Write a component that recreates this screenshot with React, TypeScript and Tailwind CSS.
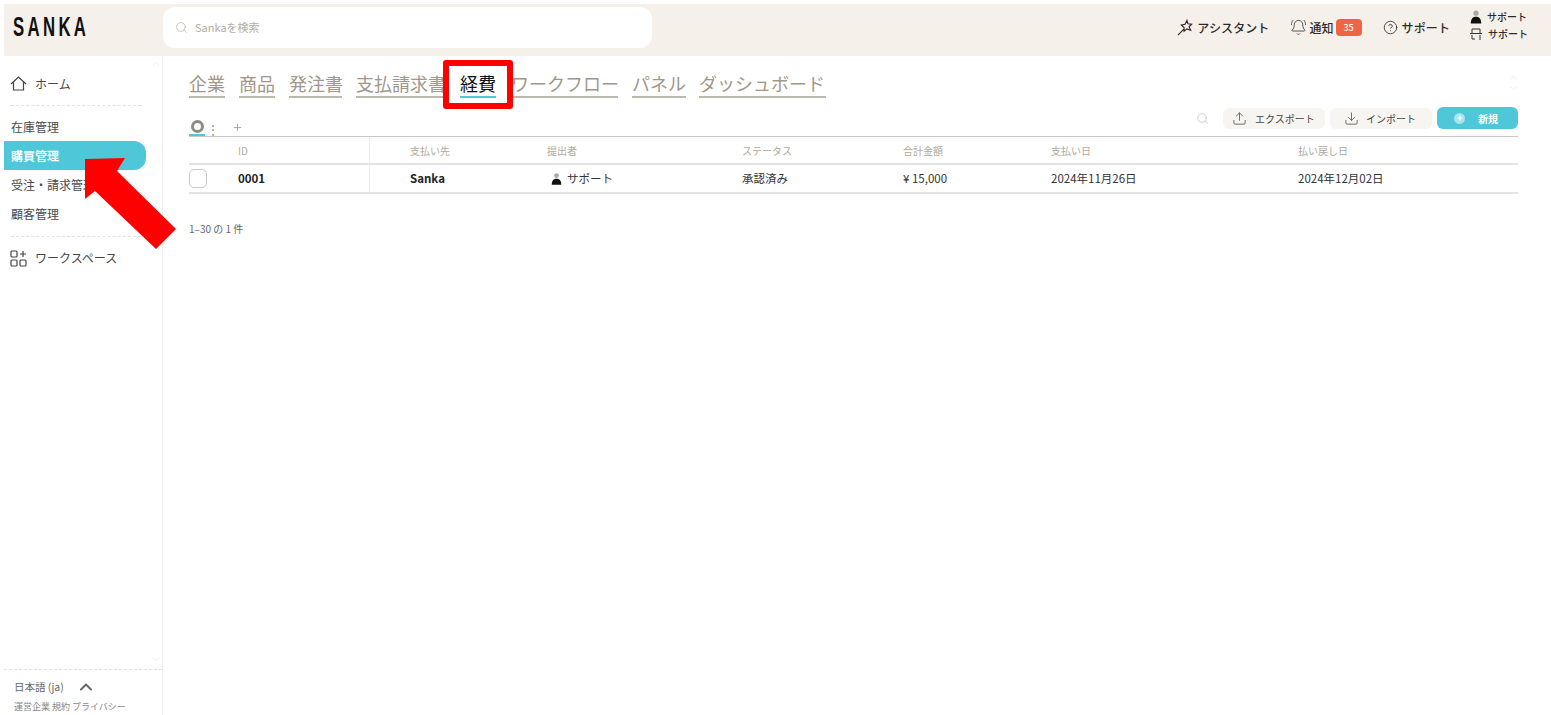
import { BellRing, ChevronDown, ChevronUp, CircleHelp, Download, Plus, Search, Upload } from "lucide-react";

const font = { fontFamily: '"Noto Sans CJK JP", "Noto Sans", sans-serif' };

const tabs = [
  { label: "企業", className: "w-9" },
  { label: "商品", className: "ml-[14px] w-9" },
  { label: "発注書", className: "ml-[14px] w-[53px]" },
  { label: "支払請求書", className: "ml-[14px] w-[89px]" },
];
const tabsAfter = [
  { label: "ワークフロー", className: "ml-[15px] w-[107px]" },
  { label: "パネル", className: "ml-[14px] w-[54px]" },
  { label: "ダッシュボード", className: "ml-[13px] w-[127px]" },
];

const headers = ["支払い先", "提出者", "ステータス", "合計金額", "支払い日", "払い戻し日"];

const gridCols = "grid grid-cols-[49px_131px_41px_137px_195px_161px_148px_247px_220px]";

function PersonIcon({ className }: { className?: string }) {
  return (
    <svg viewBox="0 0 12 14" className={className}>
      <circle cx="6" cy="3.2" r="2.6" fill="#a8a8a8" />
      <path d="M0.8 13.4 C0.8 8.6 3 6.8 6 6.8 S11.2 8.6 11.2 13.4 Z" fill="#111" />
    </svg>
  );
}

function Tab({ label, className }: { label: string; className: string }) {
  return (
    <span className={`${className} shrink-0 whitespace-nowrap border-b-2 border-[#bdb7ae] text-[18px] leading-[25px] text-[#a0978a]`}>
      {label}
    </span>
  );
}

export default function App() {
  return (
    <div style={font} className="relative flex h-[715px] w-[1551px] flex-col overflow-hidden bg-white pl-1 pt-1">
      {/* ヘッダー */}
      <header className="flex h-[52px] shrink-0 items-center bg-[#f5f0e9] pb-[5px]">
        <div className="w-[159px] pl-[9px]">
          <div
            className="origin-left scale-x-[0.62] text-[27px] font-bold leading-none tracking-[0.2em] text-[#111]"
            style={{ fontFamily: '"Liberation Sans", sans-serif' }}
          >
            SANKA
          </div>
        </div>
        <div className="flex h-[41px] w-[489px] items-center gap-[7px] rounded-xl bg-white pl-3">
          <Search className="h-[13px] w-[13px] text-[#bdb9b2]" strokeWidth={1.5} />
          <span className="text-[11px] text-[#b5ada2]">Sankaを検索</span>
        </div>
        <div className="ml-auto flex items-center pr-[23px] text-[#2b2b2b]">
          <svg viewBox="0 0 18 18" className="h-[17px] w-[17px]" fill="none" stroke="#2b2b2b" strokeWidth="1.2">
            <path d="M1 17L7.5 10.5M10.5 1.5L11.5 5L15.5 5.5L12.8 8.2L14.5 12L10.5 10.5L7.5 13L7.5 9L4.5 6.5L8.5 5.5Z" />
          </svg>
          <span className="ml-[3px] text-[12px] font-medium tracking-[0.01em]">アシスタント</span>
          <BellRing className="ml-[20px] h-[17px] w-[17px]" strokeWidth={1.1} />
          <span className="ml-[3px] text-[12px] font-medium">通知</span>
          <span className="ml-[2px] flex h-[17px] w-[26px] items-center justify-center rounded bg-[#ee6543] text-[9px] font-medium text-white">35</span>
          <CircleHelp className="ml-[21px] h-[15px] w-[15px]" strokeWidth={1.3} />
          <span className="ml-[4px] text-[12px] font-medium tracking-[0.01em]">サポート</span>
          <div className="mb-[5px] ml-[19px] flex flex-col gap-[3px] text-[10px] font-medium leading-[14px]">
            <div className="flex items-center gap-[5px]">
              <PersonIcon className="ml-px h-[14px] w-[12px]" />
              <span>サポート</span>
            </div>
            <div className="flex items-center gap-[5px]">
              <svg viewBox="0 0 14 14" className="h-[14px] w-[14px]" fill="none" stroke="#333" strokeWidth="1">
                <path d="M1 6.5H13M3 6.5V2H11V6.5M3 8V12H6M11 8V13" />
              </svg>
              <span>サポート</span>
            </div>
          </div>
        </div>
      </header>

      <div className="flex min-h-0 flex-1">
        {/* サイドバー */}
        <aside className="relative flex w-[159px] shrink-0 flex-col border-r border-[#eeeeee]">
          <ChevronUp className="absolute right-0 top-[2px] h-3 w-3 text-[#f0ebe4]" />
          <div className="flex h-[49px] items-center gap-2 pl-[6px] pt-[6px]">
            <svg viewBox="0 0 17 17" className="h-[17px] w-[17px]" fill="none" stroke="#444" strokeWidth="1.2">
              <path d="M1 9L8.5 2L16 9M3.5 7V15H13.5V7" />
            </svg>
            <span className="text-[12px] text-[#444]">ホーム</span>
          </div>
          <div className="ml-[7px] w-[130px] border-t border-dashed border-[#e5e2dc]" />
          <div className="mt-[6px] flex flex-col text-[12px] text-[#4a4a4a]">
            <div className="flex h-[29px] items-center pl-[7px]">在庫管理</div>
            <div className="flex h-[29px] w-[142px] items-center rounded-r-xl bg-[#4ec7d9] pl-[7px] font-bold text-white">購買管理</div>
            <div className="flex h-[29px] items-center pl-[7px]">受注・請求管理</div>
            <div className="flex h-[29px] items-center pl-[7px]">顧客管理</div>
          </div>
          <div className="ml-[7px] mt-[8px] w-[130px] border-t border-dashed border-[#e5e2dc]" />
          <div className="mt-[12px] flex items-center gap-2 pl-[6px]">
            <svg viewBox="0 0 17 17" className="h-[17px] w-[17px]" fill="none" stroke="#444" strokeWidth="1.2">
              <rect x="1" y="1" width="6" height="6" rx="1" />
              <rect x="1" y="10" width="6" height="6" rx="1" />
              <rect x="10" y="10" width="6" height="6" rx="1" />
              <path d="M13 1V7M10 4H16" />
            </svg>
            <span className="text-[12px] text-[#444]">ワークスペース</span>
          </div>
          <ChevronDown className="absolute bottom-[50px] right-0 h-3 w-3 text-[#f0ebe4]" />
          <div className="mt-auto border-t border-dashed border-[#e5e2dc] pb-[2px] pl-[10px] pt-[7px]">
            <div className="flex items-center gap-[12px] text-[10.5px] text-[#666]">
              <span>日本語 (ja)</span>
              <ChevronUp className="h-[20px] w-[20px] text-[#6b675f]" strokeWidth={2.4} />
            </div>
            <div className="mt-[3px] whitespace-nowrap text-[9px] text-[#888]">運営企業 規約 プライバシー</div>
          </div>
        </aside>

        {/* メイン */}
        <main className="relative min-w-0 flex-1 pl-[26px] pr-[33px]">
          <div className="flex h-[42px] items-end">
            <div className="flex items-center">
              {tabs.map((tab) => (
                <Tab key={tab.label} {...tab} />
              ))}
              <span className="ml-[15px] w-9 shrink-0 border-b-2 border-[#4ec7d9] text-[18px] leading-[25px] text-[#111]">経費</span>
              {tabsAfter.map((tab) => (
                <Tab key={tab.label} {...tab} />
              ))}
            </div>
          </div>
          <div className="absolute right-[32px] top-[16px] flex flex-col text-[#ece8e2]">
            <ChevronUp className="h-[11px] w-[11px]" />
            <ChevronDown className="h-[11px] w-[11px]" />
          </div>

          <div className="mt-[9px] flex h-[29px] items-end justify-between">
            <div className="flex items-end">
              <div className="flex h-[16px] w-[16px] items-start justify-center border-b-2 border-[#4ec7d9]">
                <div className="h-[13px] w-[13px] rounded-full border-[3px] border-[#8f8b83]" />
              </div>
              <span className="mb-[1px] ml-[2px] text-[12px] leading-none text-[#8f8b83]">⋮</span>
              <Plus className="mb-[3px] ml-[13px] h-[11px] w-[11px] text-[#8f8b83]" strokeWidth={1.5} />
            </div>
            <div className="mb-[7px] flex items-center">
              <Search className="h-[13px] w-[13px] text-[#c9c6c0]" strokeWidth={1.5} />
              <button className="ml-[14px] flex h-[21px] w-[102px] items-center gap-2 rounded-md bg-[#f7f5f1] pl-[9px] text-[10px] text-[#444]">
                <Upload className="h-[15px] w-[15px]" strokeWidth={1.2} />
                エクスポート
              </button>
              <button className="ml-[5px] flex h-[21px] w-[102px] items-center gap-[7px] rounded-md bg-[#f7f5f1] pl-[14px] text-[10px] text-[#444]">
                <Download className="h-[15px] w-[15px]" strokeWidth={1.2} />
                インポート
              </button>
              <button className="ml-[5px] flex h-[22px] w-[81px] items-center gap-[13px] rounded-md bg-[#4ec7d9] pl-[17px] text-[10px] font-bold text-white">
                <span className="flex h-[11px] w-[11px] items-center justify-center rounded-full bg-white/50">
                  <Plus className="h-[8px] w-[8px] text-white" strokeWidth={3} />
                </span>
                新規
              </button>
            </div>
          </div>

          {/* テーブル */}
          <div className="border-t-[1.5px] border-[#c8c8c8]">
            <div className={`${gridCols} h-[28px] items-center border-b-2 border-[#e4e4e4] text-[10px] text-[#b0a99d]`}>
              <span />
              <span>ID</span>
              <span className="h-full border-l border-[#eeeeee]" />
              {headers.map((h) => (
                <span key={h}>{h}</span>
              ))}
            </div>
            <div className={`${gridCols} h-[29px] items-center border-b-2 border-[#e4e4e4] text-[11.5px] text-[#333]`}>
              <span className="h-[19px] w-[18px] rounded-[5px] border border-[#c9c9c9]" />
              <span className="font-bold text-[#222]">0001</span>
              <span className="h-full border-l border-[#eeeeee]" />
              <span className="font-bold text-[#222]">Sanka</span>
              <span className="flex items-center gap-[5px] pl-1">
                <PersonIcon className="h-[14px] w-[11px]" />
                サポート
              </span>
              <span>承認済み</span>
              <span>¥ 15,000</span>
              <span>2024年11月26日</span>
              <span>2024年12月02日</span>
            </div>
          </div>
          <div className="mt-[27px] text-[10px] text-[#666]">1–30 の 1 件</div>
        </main>
      </div>

      {/* 注釈 */}
      <div className="absolute left-[443px] top-[60px] h-[49px] w-[70px] rounded-[3px] border-[6px] border-[#ff0000]" />
      <svg className="absolute left-0 top-0 h-[715px] w-[1551px]" viewBox="0 0 1551 715">
        <polygon points="85,159 125,158 117,171 176,229 156,249 95,191 85,199" fill="#ff0000" />
      </svg>
    </div>
  );
}
